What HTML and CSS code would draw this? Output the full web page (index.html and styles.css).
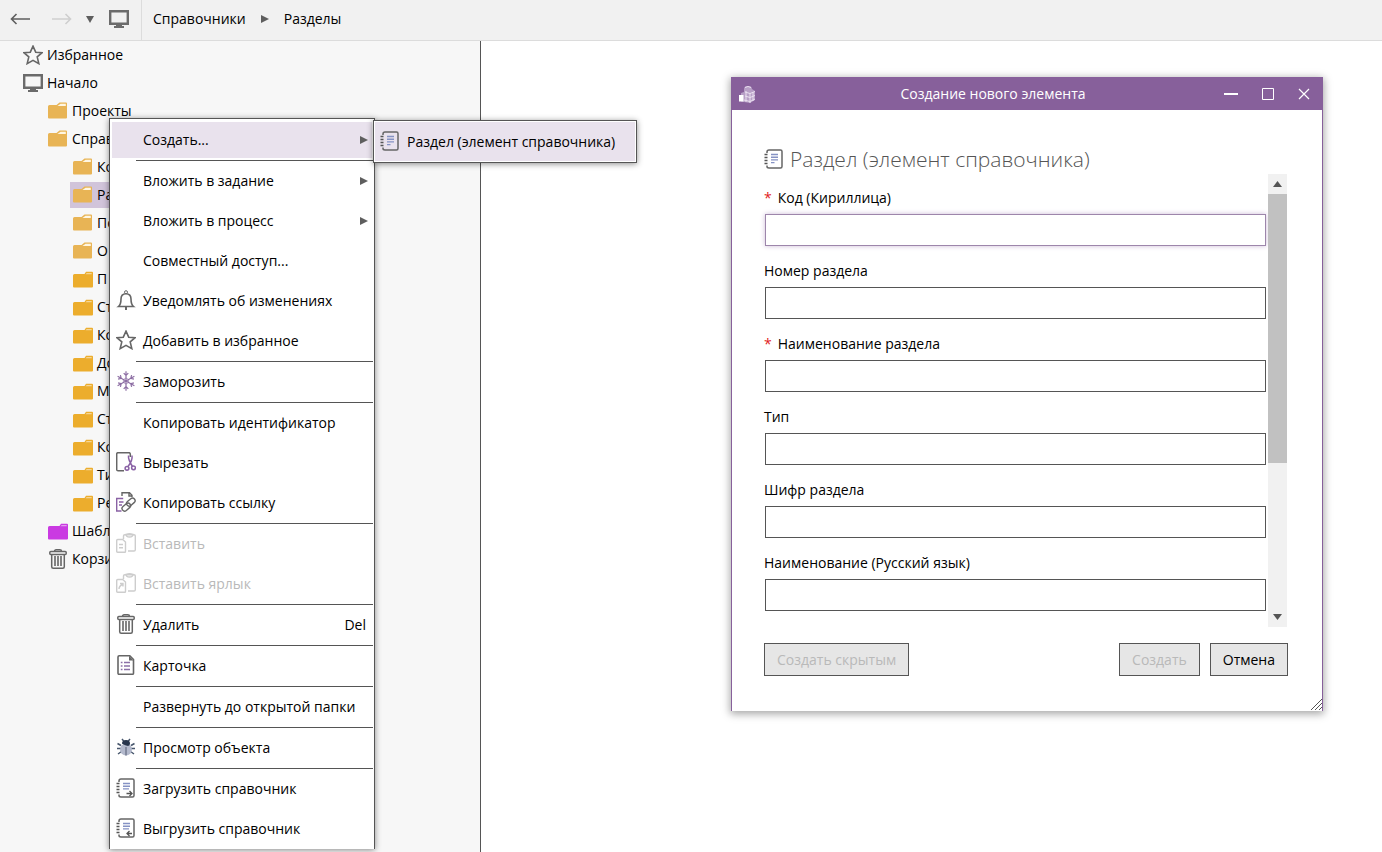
FILE: index.html
```html
<!DOCTYPE html>
<html lang="ru">
<head>
<meta charset="utf-8">
<title>Справочники</title>
<link rel="stylesheet" href="styles.css">
</head>
<body>
<svg class="defs" aria-hidden="true">
  <symbol id="star" viewBox="0 0 20 20"><path d="M10 1.200l2.700 6 6.400.500-4.900 4.200 1.600 6.700L10 15.300l-5.800 3.300 1.600-6.700L.9 7.700l6.400-.5z" fill="none" stroke="#666" stroke-width="1.600"/></symbol>
  <symbol id="monitor" viewBox="0 0 20 18"><path d="M1.200 1.200h17.600v12.600H1.200z" fill="none" stroke="#6b6b6b" stroke-width="2.400"/><path d="M7 14h6v2h2v2H5v-2h2z" fill="#6b6b6b"/></symbol>
  <symbol id="folder" viewBox="0 0 20 17"><path d="M0 4.500Q0 3 1.500 3h7l3-2.500h6.500q1 0 1 1V15.500q0 1-1 1H1q-1 0-1-1z" fill="#e8b455"/><path d="M9.500 4l3-2.300h5.300V4z" fill="#fff6e2"/></symbol>
  <symbol id="folder2" viewBox="0 0 20 17"><path d="M0 4.500Q0 3 1.500 3h10l1.500-2.300h6q1 0 1 1V15.500q0 1-1 1H1q-1 0-1-1z" fill="currentColor"/><path d="M12.500 3.300l1.200-1.400h5V3.300z" fill="#fff" opacity=".5"/></symbol>
  <symbol id="trash" viewBox="0 0 20 20"><g fill="none" stroke="#666" stroke-width="1.500"><path d="M6.500 2.500q0-1.700 1.700-1.700h3.600q1.700 0 1.700 1.700"/><rect x="1.800" y="2.400" width="16.400" height="3" rx="1"/><path d="M3.700 5.500v12.200q0 1.500 1.500 1.500h9.600q1.500 0 1.500-1.500V5.500"/></g><path d="M6.200 7h1.600v10H6.200zM9.200 7h1.600v10H9.200zM12.200 7h1.600v10h-1.600z" fill="#666"/></symbol>
  <symbol id="bell" viewBox="0 0 20 20"><g fill="none" stroke="#666" stroke-width="1.600"><circle cx="10" cy="2.200" r="1.500" stroke-width="1"/><path d="M2.500 16.500h15Q15 14.500 15 9q0-5.300-5-5.300T5 9q0 5.500-2.500 7.500z"/></g><path d="M9 17h2v3H9z" fill="#666"/></symbol>
  <symbol id="snow" viewBox="0 0 20 20"><g fill="none" stroke="#8c6da3" stroke-width="1.200"><g id="snowarm"><path d="M10 10V.3M7.700 2.200L10 4.500l2.300-2.300"/></g><use href="#snowarm" transform="rotate(60 10 10)"/><use href="#snowarm" transform="rotate(120 10 10)"/><use href="#snowarm" transform="rotate(180 10 10)"/><use href="#snowarm" transform="rotate(240 10 10)"/><use href="#snowarm" transform="rotate(300 10 10)"/><path d="M10 7l2.600 1.500v3L10 13l-2.600-1.500v-3z" stroke-width=".6"/></g></symbol>
  <symbol id="cut" viewBox="0 0 20 20"><path d="M14.300 5V2q0-1.300-1.300-1.300H2Q.7.700.7 2v15.500q0 1.300 1.300 1.300h6" fill="none" stroke="#666" stroke-width="1.500"/><g fill="none" stroke="#8a62a5" stroke-width="1.500"><path d="M12.500 3.500q-.5 4 4 11M16 3.500q.8 5-4 11"/><circle cx="11" cy="16.300" r="1.900"/><circle cx="17.500" cy="15.800" r="1.900"/></g></symbol>
  <symbol id="link" viewBox="0 0 20 20"><g fill="none" stroke="#8a62a5" stroke-width="1.400"><path d="M5.500 19H.7V6.500h6.500M3 10h4.500M3 13h3"/></g><g fill="none" stroke="#666" stroke-width="1.400"><path d="M6 4V.7h7.500L16 3.200V5M13 1v3h3"/><rect x="10" y="7.500" width="9.500" height="5.200" rx="2.600" transform="rotate(-40 14.700 10)"/><rect x="5.500" y="12.500" width="9.500" height="5.200" rx="2.600" transform="rotate(-40 10.200 15)"/></g></symbol>
  <symbol id="paste" viewBox="0 0 20 20"><g fill="none" stroke="#cdcdcd" stroke-width="1.400"><path d="M7.500 6V3q0-1.300 1.300-1.300h9.200q1.300 0 1.300 1.300v13.700q0 1.300-1.300 1.300H12"/><path d="M10 1.300q0 2.700 3.500 2.700T17 1.300q-3.500-1-7 0z"/><path d="M.7 7.500q0-1 1-1h5L9.500 9v9.500q0 .8-.8.800H1.700q-1 0-1-1zM3 11.500h4M3 14.800h4"/></g></symbol>
  <symbol id="pastelink" viewBox="0 0 20 20"><g fill="none" stroke="#cdcdcd" stroke-width="1.400"><path d="M7.500 6V3q0-1.300 1.300-1.300h9.200q1.300 0 1.300 1.300v13.700q0 1.300-1.300 1.300H12"/><path d="M10 1.300q0 2.700 3.500 2.700T17 1.300q-3.500-1-7 0z"/><path d="M.7 7.500q0-1 1-1h5L9.500 9v9.500q0 .8-.8.800H1.700q-1 0-1-1zM3 16q0-3 4-5M4 10.500h3v3"/></g></symbol>
  <symbol id="card" viewBox="0 0 20 20"><path d="M2 2Q2 .8 3.200.8h10.600L17.500 4.500v13.800q0 1-1 1H3q-1 0-1-1z" fill="none" stroke="#666" stroke-width="1.600"/><path d="M13 .8v4.700h4.500z" fill="#666"/><path d="M4.800 7.500h1.700M8 7.500h6M4.800 11h1.700M8 11h6M4.800 14.500h1.700M8 14.500h6" stroke="#8c70a8" stroke-width="1.400"/></symbol>
  <symbol id="bug" viewBox="0 0 20 20"><path d="M6 2l2 2.500M14 2l-2 2.500M1.500 6.500L5 8.500M18.500 6.500L15 8.500M1 11.500h4M19 11.500h-4M2 17l3.500-2.500M18 17l-3.500-2.500" stroke="#47566c" stroke-width="1.500" fill="none"/><ellipse cx="10" cy="12.500" rx="6" ry="6" fill="#b3b9cc"/><path d="M6 6.500q0-3.500 4-3.500t4 3.500-4 2-4-2z" fill="#27354c"/><path d="M10 10v8.500" stroke="#737b91" stroke-width="1.500"/></symbol>
  <symbol id="bookcover" viewBox="0 0 20 20"><path d="M3 4V3Q3 1 5 1h11.500q1.500 0 1.500 1.500v15q0 1.500-1.500 1.500H5q-2 0-2-1.500V16.500" fill="none" stroke="#666" stroke-width="1.500"/><path d="M.5 5.500h3M.5 8.500h3M.5 11.500h3M.5 14.500h3" stroke="#555" stroke-width="1.600"/></symbol>
  <symbol id="book" viewBox="0 0 20 20"><use href="#bookcover"/><path d="M7 5.500h7M7 8.200h7M7 10.900h7M7 13.600h3.500" stroke="#8592c4" stroke-width="1.400"/></symbol>
  <symbol id="bookload" viewBox="0 0 20 20"><use href="#bookcover"/><path d="M7 5.500h7M7 8.200h7M7 10.900h6" stroke="#8592c4" stroke-width="1.400"/><path d="M10.500 15.500h5M13.500 13l2.500 2.500-2.500 2.500" fill="none" stroke="#555" stroke-width="1.300"/></symbol>
  <symbol id="bookunload" viewBox="0 0 20 20"><use href="#bookcover"/><path d="M7 5.500h7M7 8.200h7M7 10.900h6" stroke="#8592c4" stroke-width="1.400"/><path d="M16 15.500h-5M13.500 13L11 15.500l2.500 2.500" fill="none" stroke="#555" stroke-width="1.300"/></symbol>
  <symbol id="tri" viewBox="0 0 8 8"><path d="M0 0l8 4-8 4z" fill="#5e5e5e"/></symbol>
</svg>

<header class="topbar">
  <nav class="history">
    <button class="plain" aria-label="Назад"><svg width="20" height="12" viewBox="0 0 20 12"><path d="M20 6H1.500M6.500 1L1.500 6l5 5" fill="none" stroke="#5f5f5f" stroke-width="1.600"/></svg></button>
    <button class="plain" aria-label="Вперёд"><svg width="20" height="12" viewBox="0 0 20 12"><path d="M0 6h18.500M13.500 1l5 5-5 5" fill="none" stroke="#cfcfcf" stroke-width="1.600"/></svg></button>
    <button class="plain recent" aria-label="Журнал"><svg width="8" height="7" viewBox="0 0 8 7"><path d="M0 0h8L4 7z" fill="#5e5e5e"/></svg></button>
    <button class="plain" aria-label="Начало"><svg width="20" height="18"><use href="#monitor"/></svg></button>
  </nav>
  <nav class="crumbs">
    <a href="#">Справочники</a>
    <svg width="8" height="8"><use href="#tri"/></svg>
    <a href="#">Разделы</a>
  </nav>
</header>

<main class="workspace">
  <aside class="sidebar">
    <ul class="tree">
      <li class="row"><svg class="ic"><use href="#star"/></svg>Избранное</li>
      <li class="row"><svg class="ic"><use href="#monitor"/></svg>Начало</li>
      <li class="row l1"><svg class="ic folder"><use href="#folder"/></svg>Проекты</li>
      <li class="row l1"><svg class="ic folder"><use href="#folder"/></svg>Справ</li>
      <li class="row l2"><svg class="ic folder"><use href="#folder"/></svg>Ко</li>
      <li class="row l2 selected"><svg class="ic folder"><use href="#folder"/></svg>Ра</li>
      <li class="row l2"><svg class="ic folder"><use href="#folder"/></svg>По</li>
      <li class="row l2"><svg class="ic folder"><use href="#folder"/></svg>О</li>
      <li class="row l2"><svg class="ic folder amber"><use href="#folder2"/></svg>П</li>
      <li class="row l2"><svg class="ic folder amber"><use href="#folder2"/></svg>Ст</li>
      <li class="row l2"><svg class="ic folder amber"><use href="#folder2"/></svg>Ко</li>
      <li class="row l2"><svg class="ic folder amber"><use href="#folder2"/></svg>До</li>
      <li class="row l2"><svg class="ic folder amber"><use href="#folder2"/></svg>М</li>
      <li class="row l2"><svg class="ic folder amber"><use href="#folder2"/></svg>Ст</li>
      <li class="row l2"><svg class="ic folder amber"><use href="#folder2"/></svg>Ко</li>
      <li class="row l2"><svg class="ic folder amber"><use href="#folder2"/></svg>Ти</li>
      <li class="row l2"><svg class="ic folder amber"><use href="#folder2"/></svg>Ре</li>
      <li class="row l1"><svg class="ic folder violet"><use href="#folder2"/></svg>Шабл</li>
      <li class="row l1"><svg class="ic"><use href="#trash"/></svg>Корзи</li>
    </ul>
  </aside>
</main>

<div class="menu" role="menu">
  <button class="item active" role="menuitem"><span class="slot"></span>Создать...<svg class="arrow"><use href="#tri"/></svg></button>
  <hr>
  <button class="item" role="menuitem"><span class="slot"></span>Вложить в задание<svg class="arrow"><use href="#tri"/></svg></button>
  <button class="item" role="menuitem"><span class="slot"></span>Вложить в процесс<svg class="arrow"><use href="#tri"/></svg></button>
  <button class="item" role="menuitem"><span class="slot"></span>Совместный доступ...</button>
  <button class="item" role="menuitem"><svg class="ic"><use href="#bell"/></svg>Уведомлять об изменениях</button>
  <button class="item" role="menuitem"><svg class="ic"><use href="#star"/></svg>Добавить в избранное</button>
  <hr>
  <button class="item" role="menuitem"><svg class="ic"><use href="#snow"/></svg>Заморозить</button>
  <hr>
  <button class="item" role="menuitem"><span class="slot"></span>Копировать идентификатор</button>
  <button class="item" role="menuitem"><svg class="ic"><use href="#cut"/></svg>Вырезать</button>
  <button class="item" role="menuitem"><svg class="ic"><use href="#link"/></svg>Копировать ссылку</button>
  <hr>
  <button class="item" role="menuitem" disabled><svg class="ic"><use href="#paste"/></svg>Вставить</button>
  <button class="item" role="menuitem" disabled><svg class="ic"><use href="#pastelink"/></svg>Вставить ярлык</button>
  <hr>
  <button class="item" role="menuitem"><svg class="ic"><use href="#trash"/></svg>Удалить<span class="key">Del</span></button>
  <hr>
  <button class="item" role="menuitem"><svg class="ic"><use href="#card"/></svg>Карточка</button>
  <hr>
  <button class="item" role="menuitem"><span class="slot"></span>Развернуть до открытой папки</button>
  <hr>
  <button class="item" role="menuitem"><svg class="ic"><use href="#bug"/></svg>Просмотр объекта</button>
  <hr>
  <button class="item" role="menuitem"><svg class="ic"><use href="#bookload"/></svg>Загрузить справочник</button>
  <button class="item" role="menuitem"><svg class="ic"><use href="#bookunload"/></svg>Выгрузить справочник</button>
</div>

<div class="submenu" role="menu">
  <button class="item" role="menuitem"><svg class="ic"><use href="#book"/></svg>Раздел (элемент справочника)</button>
</div>

<section class="dialog" role="dialog" aria-labelledby="dlg-title">
  <header class="titlebar">
    <svg class="logo" width="18" height="20" viewBox="0 0 18 20"><path d="M6 5q0-3 4-3t4 3l3 2v9l-5 3-9-1.500V9l3-1z" fill="#b79fc6"/><path d="M7 3.500q3-2 6 0M7 8l5 1.500L17 7.500M7 12l5 1.500 5-2M6 16l6 1.500 5-2.500M8 7v11M12 9v10M15 8v9" stroke="#eadff0" fill="none"/><path d="M1 11h4.500v6.500H1z" fill="#fff"/></svg>
    <h1 id="dlg-title">Создание нового элемента</h1>
    <div class="winbtns">
      <button class="plain" aria-label="Свернуть"><svg width="14" height="14"><path d="M0 7h14" stroke="#fff" stroke-width="2"/></svg></button>
      <button class="plain" aria-label="Развернуть"><svg width="12" height="12"><path d="M.5.500h11v11H.5z" fill="none" stroke="#fff"/></svg></button>
      <button class="plain" aria-label="Закрыть"><svg width="12" height="12"><path d="M1 1l10 10M11 1L1 11" stroke="#fff" stroke-width="1.200"/></svg></button>
    </div>
  </header>
  <form class="body">
    <h2><svg class="ic"><use href="#book"/></svg>Раздел (элемент справочника)</h2>
    <div class="scroller">
      <div class="fields">
        <div class="field"><label for="f1"><span class="req">*</span>Код (Кириллица)</label><input class="focus" id="f1" type="text"></div>
        <div class="field"><label for="f2">Номер раздела</label><input id="f2" type="text"></div>
        <div class="field"><label for="f3"><span class="req">*</span>Наименование раздела</label><input id="f3" type="text"></div>
        <div class="field"><label for="f4">Тип</label><input id="f4" type="text"></div>
        <div class="field"><label for="f5">Шифр раздела</label><input id="f5" type="text"></div>
        <div class="field"><label for="f6">Наименование (Русский язык)</label><input id="f6" type="text"></div>
      </div>
      <div class="scrollbar" aria-hidden="true">
        <span class="step"><svg width="9" height="6"><path d="M0 6h9L4.500 0z" fill="#555"/></svg></span>
        <span class="track"><span class="thumb"></span></span>
        <span class="step"><svg width="9" height="6"><path d="M0 0h9L4.500 6z" fill="#555"/></svg></span>
      </div>
    </div>
    <footer class="actions">
      <button class="btn" type="button" disabled>Создать скрытым</button>
      <button class="btn push" type="button" disabled>Создать</button>
      <button class="btn" type="button">Отмена</button>
    </footer>
  </form>
  <svg class="grip" width="11" height="11"><path d="M0 11L11 0M4 11l7-7M8 11l3-3" stroke="#555"/></svg>
</section>
</body>
</html>
```
FILE: styles.css
```css
* { box-sizing: border-box; }
body {
  margin: 0;
  min-height: 100vh;
  display: flex;
  flex-direction: column;
  overflow: hidden;
  background: #fff;
  color: #000;
  font: 14px/24px "Open Sans", "Noto Sans", sans-serif;
}
button, input { font: inherit; color: inherit; }
h1, h2, hr, ul { margin: 0; padding: 0; font-weight: 400; }
svg { display: block; flex: none; }
.defs { position: absolute; width: 0; height: 0; }
.ic { width: 20px; height: 20px; }
.plain { display: flex; padding: 0; border: 0; background: none; }

.topbar {
  display: flex;
  height: 41px;
  background: #f1f1f1;
  border-bottom: 1px solid #dcdcdc;
}
.history {
  display: flex;
  align-items: center;
  gap: 22px;
  width: 142px;
  padding: 0 0 2px 10px;
  border-right: 1px solid #dcdcdc;
}
.recent { margin: 0 -7px 0 -8px; }
.crumbs { display: flex; align-items: center; gap: 15px; padding: 0 0 2px 11px; }
.crumbs a { color: inherit; text-decoration: none; }

.workspace { flex: 1; display: flex; }
.sidebar {
  width: 481px;
  padding-top: 1px;
  background: #f7f7f7;
  border-right: 1px solid #555;
}
.tree { display: flex; flex-direction: column; gap: 2px; list-style: none; }
.row {
  display: flex;
  align-items: center;
  gap: 4px;
  height: 26px;
  margin-left: 20px;
  padding-left: 3px;
}
.l1 { margin-left: 45px; }
.l2 { margin-left: 70px; }
.folder { height: 17px; margin-bottom: 2px; }
.amber { margin-bottom: 0; color: #ecad2d; }
.violet { margin-bottom: 0; color: #ca3ae2; }
.selected { width: 90px; background: #d1c4da; }

.menu, .submenu {
  position: absolute;
  background: #fff;
  border: 1px solid #555;
  box-shadow: 0 1px 6px rgba(0, 0, 0, .45);
}
.menu { left: 109px; top: 118px; width: 266px; padding-top: 1px; border-bottom: 0; }
.menu hr { margin: 0 1px 0 26px; border: 0; height: 1px; background: #555; }
.item {
  display: flex;
  align-items: center;
  gap: 7px;
  width: 100%;
  height: 40px;
  padding: 0 6px;
  border: 0;
  background: none;
  text-align: left;
  white-space: nowrap;
}
.item .ic { margin-bottom: 2px; }
.item:disabled { color: #b9b9b9; }
.slot { width: 20px; }
.arrow { width: 8px; height: 8px; margin-left: auto; }
.key { margin-left: auto; padding-right: 2px; }
.active { background: #e9e2ed; box-shadow: inset 0 0 0 2px #fff; }

.submenu { left: 373px; top: 120px; width: 264px; padding: 1px; }
.submenu .item { height: 39px; padding: 0 5px; background: #e9e2ed; }

.dialog {
  position: absolute;
  left: 731px;
  top: 77px;
  width: 592px;
  background: #fff;
  border: 1px solid #87609b;
  border-width: 0 1px;
  box-shadow: 0 2px 8px 1px rgba(0, 0, 0, .35);
}
.titlebar {
  display: flex;
  align-items: center;
  height: 33px;
  margin: 0 -1px;
  padding: 0 13px 0 7px;
  background: #87609b;
  color: #fff;
}
.titlebar h1 { flex: 1; padding-left: 6px; font-size: 14px; text-align: center; }
.winbtns { display: flex; align-items: center; gap: 24px; }
.body { padding: 34px 35px 35px 32px; }
.body h2 {
  display: flex;
  align-items: center;
  gap: 6px;
  height: 30px;
  color: #555;
  font-size: 21px;
  font-weight: 300;
  white-space: nowrap;
}
.scroller { display: flex; gap: 2px; }
.fields { flex: 1; display: flex; flex-direction: column; gap: 13px; padding: 12px 0 16px 1px; }
.field { display: flex; flex-direction: column; gap: 4px; }
.field label { height: 24px; margin-left: -1px; }
.req { margin-right: 6px; color: #e11b22; }
.field input {
  width: 100%;
  height: 32px;
  padding: 0 8px;
  border: 1px solid #555;
  background: #fff;
}
.field .focus { border-color: #9d86ab; box-shadow: 0 0 5px #cdbbd8; }
.scrollbar { display: flex; flex-direction: column; width: 19px; background: #f1f1f1; }
.step { display: flex; align-items: center; justify-content: center; height: 20px; }
.track { flex: 1; }
.thumb { display: block; height: 269px; background: #c1c1c1; }
.actions { display: flex; gap: 10px; margin-top: 16px; margin-right: -1px; }
.btn {
  height: 33px;
  padding: 0 12px;
  border: 1px solid #555;
  background: #e6e6e6;
}
.btn:disabled { color: #b9b9b9; }
.push { margin-left: auto; }
.grip { position: absolute; right: 0; bottom: 1px; }
```
